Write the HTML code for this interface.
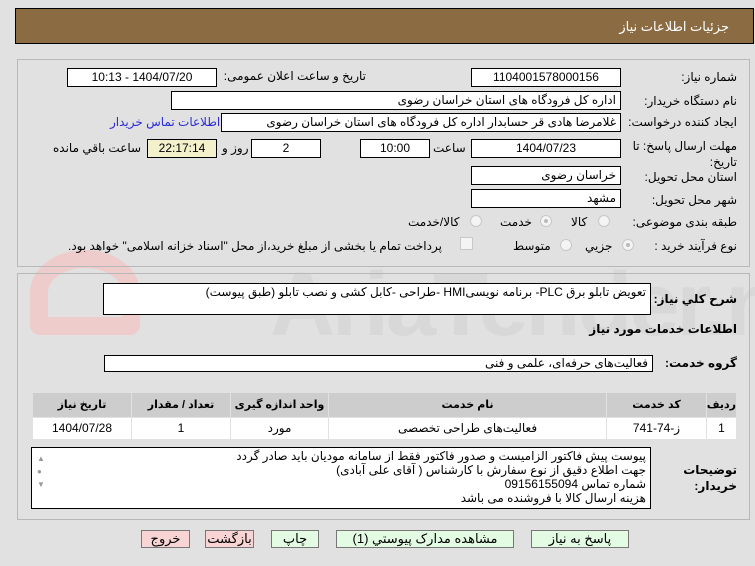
<!DOCTYPE html>
<html><head><meta charset="utf-8"><style>
body{margin:0;width:755px;height:566px;background:#e1e1e1;font-family:"Liberation Sans","DejaVu Sans",sans-serif;font-size:12px;color:#000;position:relative;overflow:hidden}
.a{position:absolute;white-space:nowrap}
.r{direction:rtl;text-align:right}
.box{position:absolute;background:#fff;border:1px solid #000;box-sizing:border-box;direction:rtl;padding:0 4px;line-height:16px;white-space:nowrap;overflow:hidden}
.c{text-align:center}
.lab{position:absolute;direction:rtl;white-space:nowrap}
.rad{position:absolute;width:12px;height:12px;border-radius:50%;border:1px solid #c8c8c8;background:#f4f4f4;box-sizing:border-box}
.rad.on::after{content:"";position:absolute;left:3px;top:3px;width:4px;height:4px;border-radius:50%;background:#bbb}
.btn{position:absolute;border:1px solid #777;box-sizing:border-box;text-align:center;line-height:16px;font-size:13px;height:18px;top:530px;direction:rtl}
td{border:1px solid #e1e1e1;text-align:center;padding:0;white-space:nowrap}
</style></head><body>
<div class="a" style="left:15px;top:8px;width:739px;height:36px;background:#8b6b42;border:1px solid #000;box-sizing:border-box"></div>
<div class="a r" style="right:26px;top:19px;color:#fff;font-size:13px">جزئیات اطلاعات نیاز</div>

<div class="a" style="left:0;top:250px;width:755px;height:110px;overflow:hidden">
<div class="a" style="left:270px;top:10px;font-size:90px;font-weight:bold;color:#d8d8d8;letter-spacing:-3px;line-height:1">AriaTender.net</div>
<div class="a" style="left:30px;top:0px;width:110px;height:85px;border:18px solid #efcccc;border-radius:50% 50% 10px 10px;box-sizing:border-box"></div>
</div>

<div class="a" style="left:17px;top:59px;width:733px;height:208px;border:1px solid #b8b8b8;box-sizing:border-box"></div>
<div class="a" style="left:17px;top:273px;width:733px;height:247px;border:1px solid #b8b8b8;box-sizing:border-box"></div>

<div class="lab" style="right:18px;top:70px">شماره نیاز:</div>
<div class="box c" style="left:471px;top:68px;width:150px;height:19px">1104001578000156</div>
<div class="lab" style="right:389px;top:69px">تاریخ و ساعت اعلان عمومی:</div>
<div class="box c" style="left:67px;top:68px;width:150px;height:19px">1404/07/20 - 10:13</div>

<div class="lab" style="right:18px;top:94px">نام دستگاه خریدار:</div>
<div class="box" style="left:171px;top:91px;width:450px;height:19px">اداره کل فرودگاه های استان خراسان رضوی</div>

<div class="lab" style="right:18px;top:115px">ایجاد کننده درخواست:</div>
<div class="box" style="left:221px;top:113px;width:400px;height:19px">غلامرضا هادی قر حسابدار اداره کل فرودگاه های استان خراسان رضوی</div>
<div class="lab" style="left:110px;top:115px;color:#2b2bd8">اطلاعات تماس خریدار</div>

<div class="lab" style="right:18px;top:139px">مهلت ارسال پاسخ: تا</div>
<div class="lab" style="right:18px;top:155px">تاریخ:</div>
<div class="box c" style="left:471px;top:139px;width:150px;height:19px">1404/07/23</div>
<div class="lab" style="left:433px;top:141px">ساعت</div>
<div class="box c" style="left:360px;top:139px;width:70px;height:19px">10:00</div>
<div class="box c" style="left:251px;top:139px;width:70px;height:19px">2</div>
<div class="lab" style="left:222px;top:141px">روز و</div>
<div class="box c" style="left:147px;top:139px;width:70px;height:19px;background:#f3f0cc">22:17:14</div>
<div class="lab" style="left:53px;top:141px">ساعت باقي مانده</div>

<div class="lab" style="right:18px;top:170px">استان محل تحویل:</div>
<div class="box" style="left:471px;top:166px;width:150px;height:19px">خراسان رضوی</div>
<div class="lab" style="right:18px;top:193px">شهر محل تحویل:</div>
<div class="box" style="left:471px;top:189px;width:150px;height:19px">مشهد</div>

<div class="lab" style="right:18px;top:215px">طبقه بندی موضوعی:</div>
<div class="rad" style="left:598px;top:215px"></div><div class="lab" style="left:571px;top:215px">کالا</div>
<div class="rad on" style="left:540px;top:215px"></div><div class="lab" style="left:500px;top:215px">خدمت</div>
<div class="rad" style="left:470px;top:215px"></div><div class="lab" style="left:408px;top:215px">کالا/خدمت</div>

<div class="lab" style="right:18px;top:239px">نوع فرآیند خرید :</div>
<div class="rad on" style="left:622px;top:239px"></div><div class="lab" style="left:585px;top:239px">جزيي</div>
<div class="rad" style="left:560px;top:239px"></div><div class="lab" style="left:513px;top:239px">متوسط</div>
<div class="a" style="left:460px;top:237px;width:13px;height:13px;border:1px solid #c8c8c8;background:#f4f4f4;box-sizing:border-box"></div>
<div class="lab" style="left:68px;top:239px">پرداخت تمام یا بخشی از مبلغ خرید،از محل "اسناد خزانه اسلامی" خواهد بود.</div>

<div class="lab" style="right:18px;top:292px;font-weight:bold;font-size:12px">شرح کلي نیاز:</div>
<div class="box" style="left:103px;top:283px;width:548px;height:32px;white-space:normal;line-height:16px">تعویض تابلو برق PLC- برنامه نویسیHMI -طراحی -کابل کشی و نصب تابلو (طبق پیوست)</div>
<div class="lab" style="right:18px;top:322px;font-weight:bold;font-size:12px">اطلاعات خدمات مورد نیاز</div>
<div class="lab" style="right:18px;top:356px;font-weight:bold;font-size:12px">گروه خدمت:</div>
<div class="box" style="left:104px;top:355px;width:549px;height:17px;line-height:15px">فعالیت‌های حرفه‌ای، علمی و فنی</div>

<table style="position:absolute;left:31px;top:391px;width:707px;height:50px;border-collapse:collapse;direction:rtl;background:#fff;border:2px solid #e1e1e1;font-size:11px;table-layout:fixed">
<tr style="background:#cdcdcd;font-weight:bold;height:25px"><td style="width:29px">ردیف</td><td style="width:99px">کد خدمت</td><td>نام خدمت</td><td style="width:97px">واحد اندازه گیری</td><td style="width:98px">تعداد / مقدار</td><td style="width:98px">تاریخ نیاز</td></tr>
<tr style="background:#fff;font-size:12px"><td>1</td><td>ز-74-741</td><td>فعالیت‌های طراحی تخصصی</td><td>مورد</td><td>1</td><td>1404/07/28</td></tr>
</table>

<div class="lab" style="right:18px;top:463px;font-weight:bold;font-size:12px">توضیحات</div>
<div class="lab" style="right:18px;top:479px;font-weight:bold;font-size:12px">خریدار:</div>
<div class="box" style="left:31px;top:447px;width:620px;height:62px;white-space:normal;line-height:14px;padding-top:1px">پیوست پیش فاکتور الزامیست و صدور فاکتور فقط از سامانه مودیان باید صادر گردد<br>جهت اطلاع دقیق از نوع سفارش با کارشناس ( آقای علی آبادی)<br>شماره تماس 09156155094<br>هزینه ارسال کالا با فروشنده می باشد</div>
<div class="a" style="left:37px;top:452px;color:#999;font-size:8px;line-height:13px">▲<br>●<br>▼</div>

<div class="btn" style="left:141px;width:49px;background:#f8d4d4">خروج</div>
<div class="btn" style="left:205px;width:49px;background:#f8d4d4">بازگشت</div>
<div class="btn" style="left:271px;width:48px;background:#e2fbe2">چاپ</div>
<div class="btn" style="left:336px;width:178px;background:#e2fbe2">مشاهده مدارک پیوستي (1)</div>
<div class="btn" style="left:531px;width:98px;background:#e2fbe2">پاسخ به نیاز</div>
</body></html>
